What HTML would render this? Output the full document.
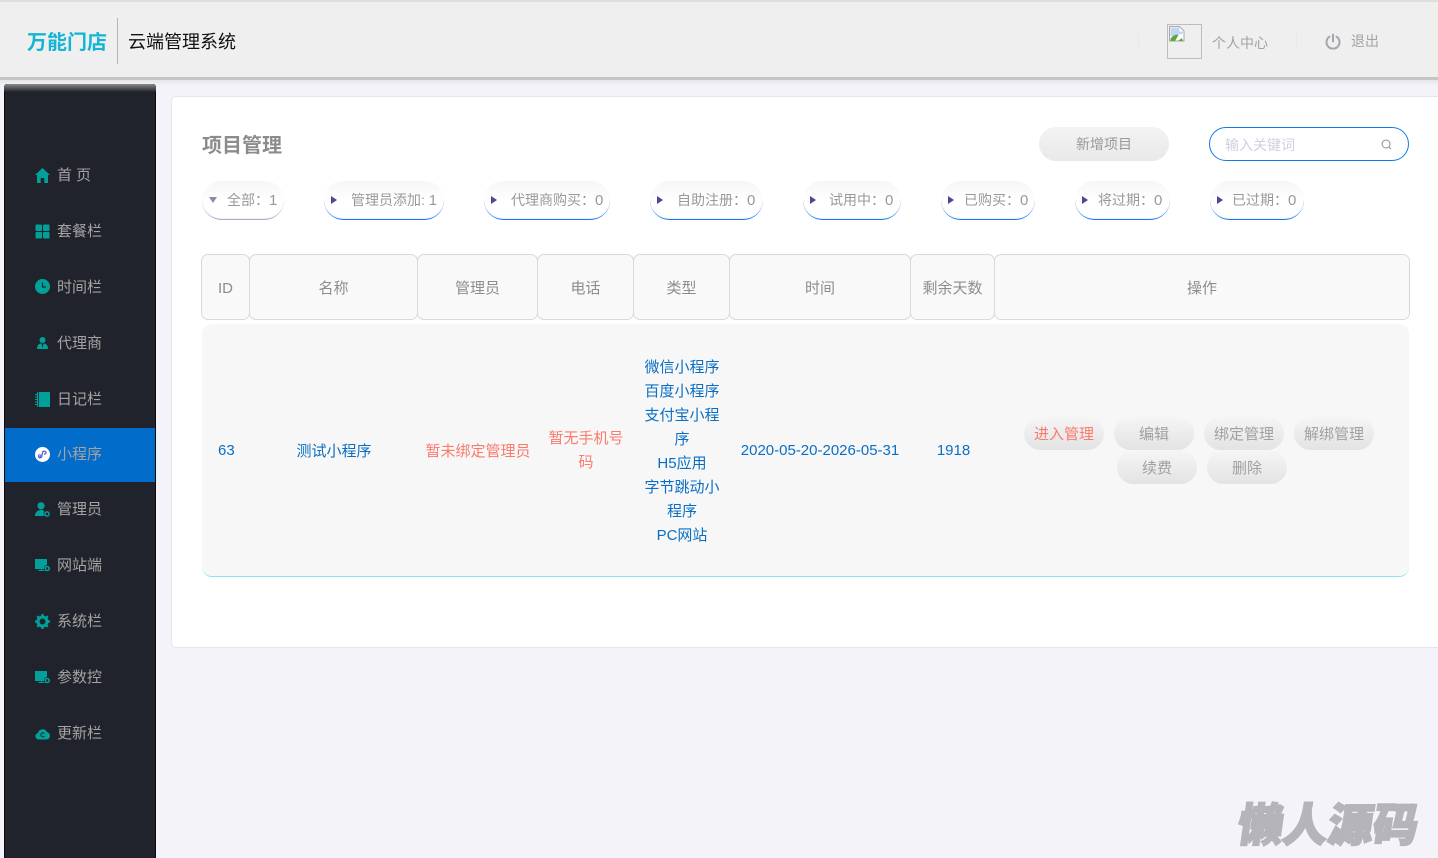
<!DOCTYPE html>
<html lang="zh-CN"><head><meta charset="utf-8"><title>项目管理</title>
<style>
*{box-sizing:border-box;margin:0;padding:0}
html,body{width:1438px;height:858px;overflow:hidden}
body{background:#f3f3f9;position:relative;font-family:"Liberation Sans","Noto Sans CJK SC",sans-serif;font-size:15px;color:#8a8a8a}
.a{position:absolute;white-space:nowrap}
.c{position:absolute;text-align:center}
#hd{position:absolute;left:0;top:0;width:1438px;height:80px;background:#efefef;border-top:2px solid #dedede;border-bottom:3px solid #c5c5c5}
#hs{position:absolute;left:0;top:80px;width:1438px;height:6px;background:linear-gradient(#e6e6ea,#f3f3f9)}
#sb{position:absolute;left:4px;top:84px;width:152px;height:774px;background:#20232b;border-left:1px solid #0b0b0d;border-right:1px solid #0b0b0d;border-radius:3px 3px 0 0}
#sbt{position:absolute;left:4px;top:84px;width:152px;height:8px;background:linear-gradient(#8a8a8a,#20232b);border-radius:3px 3px 0 0}
.m{position:absolute;left:57px;margin-top:1px;color:#a3a3a3;font-size:15px;line-height:20px;white-space:nowrap}
.i{position:absolute;left:35px;width:15px;height:15px}
#card{position:absolute;left:171px;top:96px;width:1280px;height:552px;background:#fff;border:1px solid #e5e5ec;border-radius:5px}
.tag{position:absolute;top:181px;height:39px;border-radius:20px;background:linear-gradient(#f6f6f6,#fff 55%);border-bottom:1px solid #1a78e0;font-size:14px;line-height:37px;color:#999;white-space:nowrap;box-shadow:inset 0 -1px 1px rgba(100,170,255,.15)}
.tag i{position:absolute;left:7px;top:15px;width:0;height:0;border-left:6px solid #4f4590;border-top:4px solid transparent;border-bottom:4px solid transparent}
.tag b{position:absolute;top:1px;font-weight:400}
.tag u{text-decoration:none;font-size:15px}
.th{position:absolute;top:254px;height:66px;background:#f9f9f9;border:1px solid #d9d9d9;border-radius:7px;text-align:center;line-height:68px;color:#8d8d8d;font-size:15px}
.btn{position:absolute;width:80px;height:33px;border-radius:17px;background:linear-gradient(#f5f5f5,#e3e3e3);color:#a0a0a0;text-align:center;line-height:35px;font-size:15px}
.blue{color:#0a6fc4;margin-top:1px}.red{color:#fb7a6c;margin-top:1px}
.btn.red{margin-top:0}
</style></head><body>

<div id="hd"></div><div id="hs"></div>
<div class="a" style="left:27px;top:29px;font-size:20px;line-height:28px;font-weight:700;color:#14b5d3">万能门店</div>
<div class="a" style="left:117px;top:18px;width:1px;height:46px;background:#b5b5b5"></div>
<div class="a" style="left:128px;top:29px;font-size:18px;line-height:27px;color:#111">云端管理系统</div>
<div class="a" style="left:1167px;top:24px;width:35px;height:35px;border:1px solid #bdbdbd">
<svg width="16" height="16" viewBox="0 0 16 16" style="position:absolute;left:1px;top:1px"><path d="M.5.5h10l4.500 4.500v10H.5z" fill="#fff" stroke="#a9a9a9"/><path d="M1.500 1.500h9v4h3.500v2l-12.500 3z" fill="#c3d4f3"/><path d="M1.500 15v-2.500c3-3.500 6-4.500 8-3.500l-3.500 6z" fill="#5da63a"/><path d="M9 15l4-3 1 3z" fill="#5da63a"/></svg></div>
<div class="a" style="left:1212px;top:33px;font-size:14px;line-height:20px;color:#a3a3a3">个人中心</div>
<svg class="a" style="left:1324px;top:33px" width="18" height="18" viewBox="0 0 18 18" fill="none" stroke="#a5a5ad" stroke-width="2" stroke-linecap="round"><path d="M5.500 3.700a6.500 6.500 0 1 0 7 0"/><path d="M9 1.500v7"/></svg>
<div class="a" style="left:1351px;top:31px;font-size:14px;line-height:20px;color:#a3a3a3">退出</div>
<div class="a" style="left:1138px;top:33px;width:1px;height:16px;background:#e9e9e9"></div>
<div class="a" style="left:1296px;top:33px;width:1px;height:16px;background:#e9e9e9"></div>

<div id="sb"></div><div id="sbt"></div>
<div class="a" style="left:5px;top:428px;width:150px;height:54px;background:#026cca"></div>

<svg class="i" style="top:168px" viewBox="0 0 15 15" fill="#01a19a"><path d="M7.500 0 15 7h-2v8H9.300v-5H5.700v5H2V7H0z"/></svg>
<div class="m" style="top:165px">首 页</div>
<svg class="i" style="top:224px" viewBox="0 0 15 15" fill="#01a19a"><rect x=".5" y=".5" width="6.500" height="6.500" rx="1"/><rect x="8" y=".5" width="6.500" height="6.500" rx="1"/><rect x=".5" y="8" width="6.500" height="6.500" rx="1"/><rect x="8" y="8" width="6.500" height="6.500" rx="1"/></svg>
<div class="m" style="top:221px">套餐栏</div>
<svg class="i" style="top:279px" viewBox="0 0 15 15"><circle cx="7.500" cy="7.500" r="7.500" fill="#01a19a"/><path d="M7.500 3.500v4.500h3.500" fill="none" stroke="#20232b" stroke-width="1.200"/></svg>
<div class="m" style="top:277px">时间栏</div>
<svg class="i" style="top:336px" viewBox="0 0 15 15" fill="#01a19a"><circle cx="7.500" cy="4" r="3"/><path d="M2 13c0-3.500 1.500-5.500 4.500-5.500L7.500 12 8.500 7.500c3 0 4.500 2 4.500 5.500z"/></svg>
<div class="m" style="top:333px">代理商</div>
<svg class="i" style="top:392px" viewBox="0 0 15 15" fill="#01a19a"><rect x="2" y="0" width="13" height="15" rx="1"/><path d="M0 2.500h3M0 5h3M0 7.500h3M0 10h3M0 12.500h3" stroke="#01a19a" stroke-width="1"/><path d="M3.500 0v15" stroke="#20232b" stroke-width=".8"/></svg>
<div class="m" style="top:389px">日记栏</div>
<svg class="i" style="top:447px" viewBox="0 0 15 15"><circle cx="7.500" cy="7.500" r="7.500" fill="#fff"/><path d="M3.500 9.500c0 1.500 2.500 2 3.200.2L7.500 5.500c.5-2 3.500-1.500 3.500.2 0 1-1 1.500-2 1.300" fill="none" stroke="#5a62d8" stroke-width="1.300"/><circle cx="4.600" cy="8.800" r="1.100" fill="none" stroke="#5a62d8"/></svg>
<div class="m" style="top:444px">小程序</div>
<svg class="i" style="top:502px" viewBox="0 0 15 15" fill="#01a19a"><circle cx="6" cy="3.800" r="3.600"/><path d="M0 14c0-3.500 2-6 6-6 1.500 0 2.500.3 3.300 1-.9 1.200-.9 3.500.2 5z"/><circle cx="12" cy="12" r="2.100" fill="none" stroke="#01a19a" stroke-width="1.500"/></svg>
<div class="m" style="top:499px">管理员</div>
<svg class="i" style="top:558px" viewBox="0 0 15 15" fill="#01a19a"><path d="M0 1h12v6a3.800 3.800 0 0 0-3 3.500v.5H7v1h2.500v1h-6v-1H6v-1H0z"/><circle cx="12.200" cy="10.500" r="2" fill="none" stroke="#01a19a" stroke-width="1.600"/></svg>
<div class="m" style="top:555px">网站端</div>
<svg class="i" style="top:614px" viewBox="0 0 15 15"><circle cx="7.500" cy="7.500" r="4.500" fill="none" stroke="#01a19a" stroke-width="3"/><path d="M7.500 0v15M0 7.500h15M2.200 2.200l10.600 10.600M12.800 2.200 2.200 12.800" stroke="#01a19a" stroke-width="2.200" stroke-dasharray="2.500 10 2.500 0"/></svg>
<div class="m" style="top:611px">系统栏</div>
<svg class="i" style="top:670px" viewBox="0 0 15 15" fill="#01a19a"><path d="M0 1h12v6a3.800 3.800 0 0 0-3 3.500v.5H7v1h2.500v1h-6v-1H6v-1H0z"/><circle cx="12.200" cy="10.500" r="2" fill="none" stroke="#01a19a" stroke-width="1.600"/></svg>
<div class="m" style="top:667px">参数控</div>
<svg class="i" style="top:726px" viewBox="0 0 15 15" fill="#01a19a"><path d="M3.500 13.500a3.300 3.300 0 0 1-.6-6.500 4.800 4.800 0 0 1 9-1 3.800 3.800 0 0 1 3.100 3.800c0 2-1.500 3.700-3.500 3.700z"/><path d="M9.400 7.600a2 2 0 1 0 0 2.500" fill="none" stroke="#20232b"/></svg>
<div class="m" style="top:723px">更新栏</div>

<div id="card"></div>
<div class="a" style="left:202px;top:131px;font-size:20px;line-height:30px;font-weight:700;color:#8c8c8c">项目管理</div>
<div class="c" style="left:1039px;top:127px;width:130px;height:34px;border-radius:17px;background:linear-gradient(#f3f3f3,#e9e9e9);font-size:14px;line-height:34px;color:#999">新增项目</div>
<div class="a" style="left:1209px;top:127px;width:200px;height:34px;border:1px solid #0f7bea;border-radius:17px;background:#fff"></div>
<div class="a" style="left:1225px;top:135px;font-size:14px;line-height:20px;color:#cdd0e2">输入关键词</div>
<svg class="a" style="left:1380px;top:138px" width="13" height="13" viewBox="0 0 13 13" fill="none" stroke="#8a8f98"><circle cx="6" cy="6" r="4"/><path d="M9 9l2 2"/></svg>

<div class="tag" style="left:202px;width:82px;border-bottom-color:#a9a9c0"><i style="left:7px;top:16px;border:4px solid transparent;border-top:6px solid #8b8ba8;border-bottom:0;border-left-width:4px"></i><b style="left:25px">全部：<u>1</u></b></div>
<div class="tag" style="left:324px;width:120px"><i></i><b style="left:27px">管理员添加: <u>1</u></b></div>
<div class="tag" style="left:484px;width:126px"><i></i><b style="left:27px">代理商购买：<u>0</u></b></div>
<div class="tag" style="left:650px;width:113px"><i></i><b style="left:27px">自助注册：<u>0</u></b></div>
<div class="tag" style="left:803px;width:98px"><i></i><b style="left:26px">试用中：<u>0</u></b></div>
<div class="tag" style="left:941px;width:94px"><i></i><b style="left:23px">已购买：<u>0</u></b></div>
<div class="tag" style="left:1075px;width:95px"><i></i><b style="left:23px">将过期：<u>0</u></b></div>
<div class="tag" style="left:1210px;width:94px"><i></i><b style="left:22px">已过期：<u>0</u></b></div>

<div class="th" style="left:201px;width:49px">ID</div>
<div class="th" style="left:249px;width:169px">名称</div>
<div class="th" style="left:417px;width:121px">管理员</div>
<div class="th" style="left:537px;width:97px">电话</div>
<div class="th" style="left:633px;width:97px">类型</div>
<div class="th" style="left:729px;width:182px">时间</div>
<div class="th" style="left:910px;width:85px">剩余天数</div>
<div class="th" style="left:994px;width:416px">操作</div>

<div class="a" style="left:202px;top:324px;width:1207px;height:253px;background:#f7f7f7;border-radius:10px;border-bottom:1px solid #8fe0fb"></div>
<div class="a blue" style="left:218px;top:440px;line-height:20px">63</div>
<div class="c blue" style="left:250px;top:441px;width:168px;line-height:20px">测试小程序</div>
<div class="c red" style="left:418px;top:441px;width:120px;line-height:20px">暂未绑定管理员</div>
<div class="c red" style="left:546px;top:426px;width:80px;line-height:24px">暂无手机号<br>码</div>
<div class="c blue" style="left:634px;top:355px;width:96px;line-height:24px">微信小程序<br>百度小程序<br>支付宝小程<br>序<br>H5应用<br>字节跳动小<br>程序<br>PC网站</div>
<div class="c blue" style="left:730px;top:440px;width:180px;line-height:20px">2020-05-20-2026-05-31</div>
<div class="c blue" style="left:911px;top:440px;width:85px;line-height:20px">1918</div>

<div class="btn red" style="left:1024px;top:417px">进入管理</div>
<div class="btn" style="left:1114px;top:417px">编辑</div>
<div class="btn" style="left:1204px;top:417px">绑定管理</div>
<div class="btn" style="left:1294px;top:417px">解绑管理</div>
<div class="btn" style="left:1117px;top:451px">续费</div>
<div class="btn" style="left:1207px;top:451px">删除</div>

<div class="a" style="left:1234px;top:795px;font-size:45px;line-height:62px;font-weight:900;color:#b5b4b8;-webkit-text-stroke:2px #b5b4b8;text-shadow:0 0 3px #fff;transform:skewX(-8deg);transform-origin:0 100%">懒人源码</div>
</body></html>
